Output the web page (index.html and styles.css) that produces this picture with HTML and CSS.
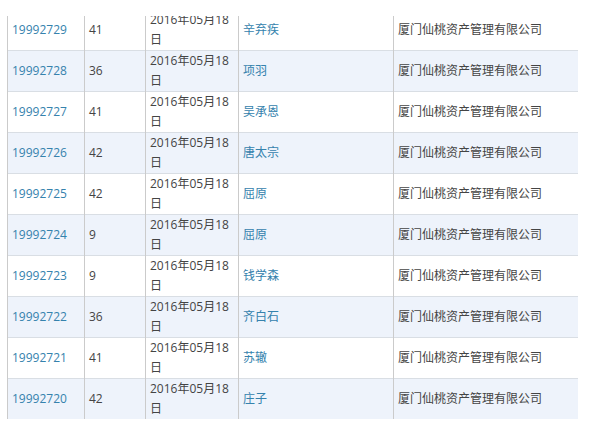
FILE: index.html
```html
<!DOCTYPE html>
<html lang="zh-CN">
<head>
<meta charset="utf-8">
<link rel="stylesheet" href="styles.css">
</head>
<body>
<div class="frame">
<table class="list">
<colgroup><col class="c1"><col class="c2"><col class="c3"><col class="c4"><col class="c5"></colgroup>
<tbody>
<tr><td><a class="lnk">19992729</a></td><td>41</td><td>2016年05月18<br>日</td><td><a class="lnk">辛弃疾</a></td><td>厦门仙桃资产管理有限公司</td></tr>
<tr class="alt"><td><a class="lnk">19992728</a></td><td>36</td><td>2016年05月18<br>日</td><td><a class="lnk">项羽</a></td><td>厦门仙桃资产管理有限公司</td></tr>
<tr><td><a class="lnk">19992727</a></td><td>41</td><td>2016年05月18<br>日</td><td><a class="lnk">吴承恩</a></td><td>厦门仙桃资产管理有限公司</td></tr>
<tr class="alt"><td><a class="lnk">19992726</a></td><td>42</td><td>2016年05月18<br>日</td><td><a class="lnk">唐太宗</a></td><td>厦门仙桃资产管理有限公司</td></tr>
<tr><td><a class="lnk">19992725</a></td><td>42</td><td>2016年05月18<br>日</td><td><a class="lnk">屈原</a></td><td>厦门仙桃资产管理有限公司</td></tr>
<tr class="alt"><td><a class="lnk">19992724</a></td><td>9</td><td>2016年05月18<br>日</td><td><a class="lnk">屈原</a></td><td>厦门仙桃资产管理有限公司</td></tr>
<tr><td><a class="lnk">19992723</a></td><td>9</td><td>2016年05月18<br>日</td><td><a class="lnk">钱学森</a></td><td>厦门仙桃资产管理有限公司</td></tr>
<tr class="alt"><td><a class="lnk">19992722</a></td><td>36</td><td>2016年05月18<br>日</td><td><a class="lnk">齐白石</a></td><td>厦门仙桃资产管理有限公司</td></tr>
<tr><td><a class="lnk">19992721</a></td><td>41</td><td>2016年05月18<br>日</td><td><a class="lnk">苏辙</a></td><td>厦门仙桃资产管理有限公司</td></tr>
<tr class="alt"><td><a class="lnk">19992720</a></td><td>42</td><td>2016年05月18<br>日</td><td><a class="lnk">庄子</a></td><td>厦门仙桃资产管理有限公司</td></tr>
</tbody>
</table>
</div>
</body>
</html>
```
FILE: styles.css
```css
html, body {
  margin: 0;
  padding: 0;
  background: #ffffff;
}
body {
  font-family: "Open Sans", "Noto Sans CJK SC", sans-serif;
  font-size: 12px;
  color: #444444;
}
.frame {
  margin: 16px 0 0 7px;
  width: 571px;
  height: 403px;
  overflow: hidden;
}
.list {
  margin-top: -7px;
  width: 571px;
  table-layout: fixed;
  border-collapse: collapse;
}
.c1 { width: 77px; }
.c2 { width: 61px; }
.c3 { width: 93px; }
.c4 { width: 155px; }
.c5 { width: 185px; }
.list td {
  height: 40px;
  padding: 0 0 0 4px;
  line-height: 20px;
  vertical-align: middle;
  border-left: 1px solid #cbcbcb;
  border-top: 1px solid #d9dee4;
  white-space: nowrap;
}
.alt td {
  background: #eef3fb;
}
.lnk {
  color: #3582ad;
  text-decoration: none;
}
```
